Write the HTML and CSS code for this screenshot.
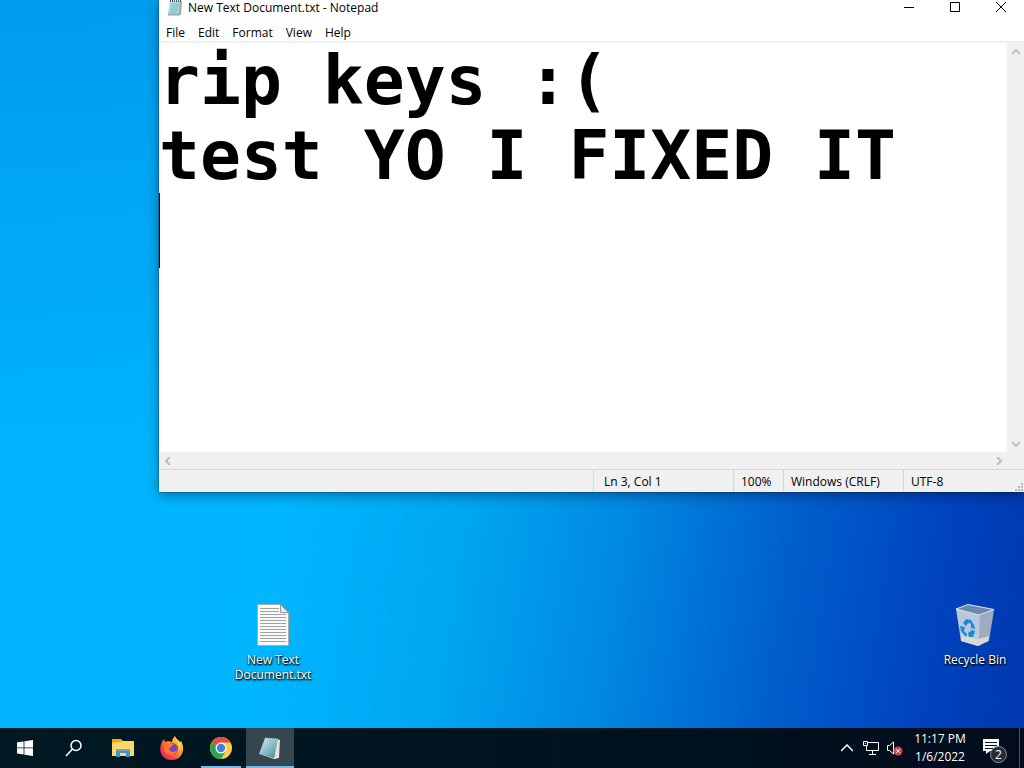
FILE: index.html
```html
<!DOCTYPE html>
<html lang="en">
<head>
<meta charset="utf-8">
<meta name="viewport" content="width=device-width, initial-scale=1">
<title>New Text Document.txt - Notepad</title>
<link rel="stylesheet" href="styles.css">
</head>
<body>
<main class="desktop">
  <section class="window" aria-label="Notepad">
    <header class="titlebar">
      <svg class="title-icon" width="16" height="16" viewBox="0 0 16 16" aria-hidden="true">
        <path d="M3 1h12l-1 14H1z" fill="#8cc9d6"/><path d="M3 1h10l-2 12H1z" fill="#b5dfe8"/>
        <path d="M4 4h8M4 6h8M3 8h8M3 10h8M3 12h7" stroke="#79b5c8"/><path d="M14 2l-1 13H1" fill="none" stroke="#a89c86"/>
        <path d="M3 1h12" stroke="#45525a" stroke-width="2" stroke-dasharray="1 1"/>
      </svg>
      <span class="title">New Text Document.txt - Notepad</span>
      <div class="captions">
        <button class="caption" aria-label="Minimize"><svg width="10" height="10" viewBox="0 0 10 10"><path d="M0 5.500h10" stroke="#000"/></svg></button>
        <button class="caption" aria-label="Maximize"><svg width="10" height="10" viewBox="0 0 10 10"><path d="M.5.5h9v9h-9z" fill="none" stroke="#000"/></svg></button>
        <button class="caption" aria-label="Close"><svg width="10" height="10" viewBox="0 0 10 10"><path d="M0 0l10 10M10 0L0 10" stroke="#000"/></svg></button>
      </div>
    </header>
    <nav class="menubar" aria-label="Menu">
      <button class="menu">File</button><button class="menu">Edit</button><button class="menu">Format</button><button class="menu">View</button><button class="menu">Help</button>
    </nav>
    <div class="editor">
      <textarea class="text" aria-label="Text editor" wrap="off" spellcheck="false">rip keys :(
test YO I FIXED IT
</textarea>
      <span class="caret"></span>
      <div class="vscroll">
        <button class="arrow" aria-label="Scroll up"><svg width="8" height="6" viewBox="0 0 8 6"><path d="M0 5l4-4 4 4" /></svg></button>
        <button class="arrow" aria-label="Scroll down"><svg width="8" height="6" viewBox="0 0 8 6"><path d="M0 1l4 4 4-4" /></svg></button>
      </div>
    </div>
    <div class="hscroll">
      <button class="arrow" aria-label="Scroll left"><svg width="6" height="8" viewBox="0 0 6 8"><path d="M5 0L1 4l4 4" /></svg></button>
      <button class="arrow" aria-label="Scroll right"><svg width="6" height="8" viewBox="0 0 6 8"><path d="M1 0l4 4-4 4" /></svg></button>
    </div>
    <footer class="status">
      <span class="cell cell-position">Ln 3, Col 1</span>
      <span class="cell cell-zoom">100%</span>
      <span class="cell cell-ending">Windows (CRLF)</span>
      <span class="cell cell-encoding">UTF-8</span>
      <svg class="grip" width="9" height="9" viewBox="0 0 9 9" fill="#b8b8b8" aria-hidden="true"><path d="M7 0h2v2H7zM4 3h2v2H4zM7 3h2v2H7zM1 6h2v2H1zM4 6h2v2H4zM7 6h2v2H7z"/></svg>
    </footer>
  </section>

  <button class="shortcut shortcut-document">
    <svg width="32" height="42" viewBox="0 0 32 42" aria-hidden="true">
      <path d="M.5.5h23l8 8v33H.5z" fill="#fafafa" stroke="#b3a99f"/>
      <path d="M3 4.500h19M3 7.500h19M3 10.500h26M3 13.500h26M3 16.500h26M3 19.500h26M3 22.500h26M3 25.500h26M3 28.500h26M3 31.500h26M3 34.500h26M3 37.500h26" stroke="#a2a2a2"/>
      <path d="M23.500.5v8h8z" fill="#e6eef2" stroke="#8e989d"/>
    </svg>
    <span>New Text Document.txt</span>
  </button>
  <button class="shortcut shortcut-bin">
    <svg width="40" height="42" viewBox="0 0 40 42" aria-hidden="true">
      <path d="M1 5l23 6-1 31-17-5z" fill="#b9c8dc"/><path d="M24 11l15-5-5 31-11 5z" fill="#9eabc0"/>
      <path d="M1 5L13 .5l26 5L24 11z" fill="#6f88ae" stroke="#e1e9f2"/>
      <path d="M6 31l17 4 11-3-1 5-10 5-17-5z" fill="#d8d8d5"/>
      <path d="M24 11l-1 31" stroke="#cbd5e2"/>
      <path d="M8 19l3-4 5 1 1 4-4-1-2 3zM16 16l3 5 1 4-4-1zM5 22l5 1-1 4 3 3-1 3-5-6zM13 29l4-3 3 1-2 6h-4z" fill="#168bdc"/>
    </svg>
    <span>Recycle Bin</span>
  </button>
</main>

<footer class="taskbar">
  <div class="apps">
    <button class="app" aria-label="Start"><svg width="16" height="16" viewBox="0 0 16 16" fill="#fff"><path d="M0 2.300l6.600-.9v6.100H0zM7.400 1.300L16 0v7.500H7.400zM0 8.300h6.600v6.200L0 13.600zM7.400 8.300H16V16l-8.600-1.300z"/></svg></button>
    <button class="app" aria-label="Search"><svg width="18" height="18" viewBox="0 0 18 18" fill="none" stroke="#fff" stroke-width="1.500"><circle cx="11" cy="6.500" r="5"/><path d="M7.500 10L1 17"/></svg></button>
    <button class="app" aria-label="File Explorer"><svg width="22" height="18" viewBox="0 0 22 18"><path d="M0 0h9l2 2h10v15H0z" fill="#e7aa24"/><path d="M0 4l9-1 2-1h11v15H0z" fill="#ffd767"/><path d="M4 18v-8h14v8h-4v-4H8v4z" fill="#3994cf"/><path d="M4 10h14v2H4z" fill="#63a9cb"/></svg></button>
    <button class="app" aria-label="Firefox"><svg width="24" height="24" viewBox="0 0 24 24">
      <defs><linearGradient id="fire" x1="1" y1="0" x2="0" y2="1"><stop stop-color="#fff34f"/><stop offset=".4" stop-color="#ff9825"/><stop offset=".7" stop-color="#ff3e41"/><stop offset="1" stop-color="#df168f"/></linearGradient></defs>
      <path d="M2 6l2-3 1 3 3-1 4 1c0-3 2-5 3-6 1 3 4 4 5 6l1-1c5 8 1 19-9 19C1 24-2 14 2 6z" fill="url(#fire)"/>
      <circle cx="12" cy="13" r="6" fill="#7445c8"/><path d="M5 8c4-3 6 0 9 0l-3 3c-3 1-2 4 1 5 3 0 3-1 5-2-1 5-7 7-11 3-3-3-2-7-1-9z" fill="#ff7830"/><path d="M15 3c4 4 5 9 3 13 4-4 4-9-3-13z" fill="#ffe43f"/>
    </svg></button>
    <button class="app app-open" aria-label="Google Chrome"><svg width="22" height="22" viewBox="0 0 22 22"><circle cx="11" cy="11" r="11" fill="#ffcf42"/><path d="M11 11L1.500 5.500A11 11 0 0 1 20.500 5.500H11z" fill="#e54a3d"/><path d="M1.500 5.500A11 11 0 0 0 11 22l5-8.500-5-2.500z" fill="#28a557"/><circle cx="11" cy="11" r="5.500" fill="#fff"/><circle cx="11" cy="11" r="4.200" fill="#427fdc"/></svg></button>
    <button class="app app-open app-active" aria-label="Notepad"><svg width="24" height="24" viewBox="0 0 24 24"><defs><linearGradient id="note" x1="0" y1="0" x2="1" y2="1"><stop stop-color="#d9f0ef"/><stop offset=".6" stop-color="#7fb4bf"/><stop offset="1" stop-color="#408394"/></linearGradient></defs><path d="M18 3l4 1-1 18-5 1z" fill="#e2e3dd"/><path d="M7 2l13 1-4 19L1 18z" fill="url(#note)"/><path d="M1 18l15 4 5-1-5 2z" fill="#d8e1e0"/><path d="M7 2l13 1" stroke="#c3cccd" stroke-dasharray="1 1"/></svg></button>
  </div>
  <div class="tray">
    <button class="tray-button" aria-label="Show hidden icons"><svg width="12" height="8" viewBox="0 0 12 8" fill="none" stroke="#fff" stroke-width="1.500"><path d="M0 7l6-6 6 6"/></svg></button>
    <button class="tray-button" aria-label="Network"><svg width="16" height="14" viewBox="0 0 16 14" fill="none" stroke="#fff"><path d="M5 1.500h10.500v8H3.500V5M9.500 10v3M6 13.500h7M.5.5h4v4h-4zM2.500 2v1"/></svg></button>
    <button class="tray-button" aria-label="Volume muted"><svg width="18" height="16" viewBox="0 0 18 16"><path d="M1.500 5.500h2L7.500 2v12l-4-3.500h-2z" fill="none" stroke="#fff"/><circle cx="12" cy="11" r="4.500" fill="#d64545"/><path d="M10 9l4 4M14 9l-4 4" stroke="#fff"/></svg></button>
    <button class="clock"><span>11:17 PM</span><span>1/6/2022</span></button>
    <button class="notices" aria-label="Notifications, 2 new"><svg width="18" height="17" viewBox="0 0 18 17"><path d="M1 1h16v12H8l-4 3v-3H1z" fill="#fff"/><path d="M3 4.500h12M3 7.500h12M3 10.500h8" stroke="#07131f"/></svg><span class="badge">2</span></button>
    <button class="show-desktop" aria-label="Show desktop"></button>
  </div>
</footer>
</body>
</html>
```
FILE: styles.css
```css
* { box-sizing: border-box; }

body {
  margin: 0;
  height: 100vh;
  display: flex;
  flex-direction: column;
  overflow: hidden;
  font: 12px/16px "Segoe UI", "Open Sans", sans-serif;
  color: #000;
}

button {
  margin: 0;
  padding: 0;
  border: 0;
  background: none;
  color: inherit;
  font: inherit;
}

.desktop {
  position: relative;
  flex: 1;
  background:
    linear-gradient(180deg, rgba(0, 100, 200, 0.3), transparent 65%),
    linear-gradient(99deg, #00b4fe 0%, #00b6ff 32%, #00a6f2 48%, #0089e2 62%, #005fcd 77%, #0042be 91%, #0038b0 100%);
}

.window {
  position: absolute;
  top: 0;
  left: 159px;
  right: 0;
  height: 492px;
  display: flex;
  flex-direction: column;
  background: #fff;
  box-shadow: 0 3px 12px rgba(0, 0, 0, 0.4), 0 0 1px #000;
}

.titlebar {
  height: 24px;
  display: flex;
  align-items: flex-start;
  padding-left: 8px;
}

.title-icon { margin-right: 5px; }

.captions {
  margin-left: auto;
  display: flex;
}

.caption {
  width: 46px;
  height: 14px;
  display: grid;
  place-items: center;
}

.menubar {
  height: 19px;
  display: flex;
  border-bottom: 2px solid #f0f0f0;
}

.menu { padding: 0 6px 0 7px; }

.editor {
  position: relative;
  flex: 1;
  display: flex;
  min-height: 0;
}

.text {
  flex: 1;
  min-width: 0;
  border: 0;
  margin: 0;
  padding: 0;
  outline: 0;
  resize: none;
  overflow: hidden;
  background: #fff;
  color: #000;
  font: bold 68px/75px "DejaVu Sans Mono", monospace;
}

.caret {
  position: absolute;
  top: 150px;
  left: 0;
  width: 1px;
  height: 75px;
  background: #000;
}

.vscroll,
.hscroll {
  display: flex;
  justify-content: space-between;
  background: #f0f0f0;
}

.vscroll {
  width: 17px;
  flex-direction: column;
}

.hscroll {
  height: 17px;
  padding-right: 17px;
}

.arrow {
  width: 17px;
  height: 17px;
  display: grid;
  place-items: center;
}

.arrow path {
  fill: none;
  stroke: #bdbdbd;
  stroke-width: 2;
}

.status {
  position: relative;
  height: 23px;
  display: flex;
  justify-content: flex-end;
  border-top: 1px solid #d7d7d7;
  background: #f0f0f0;
}

.cell {
  padding: 4px 7px 0;
  border-left: 1px solid #d7d7d7;
}

.cell-position { width: 140px; padding-left: 10px; }
.cell-zoom { width: 50px; }
.cell-ending { width: 120px; }
.cell-encoding { width: 121px; }

.grip {
  position: absolute;
  right: 1px;
  bottom: 0;
}

.shortcut {
  position: absolute;
  top: 604px;
  width: 76px;
  display: flex;
  flex-direction: column;
  align-items: center;
  gap: 6px;
  color: #fff;
  line-height: 15px;
  text-shadow: 0 1px 2px #000, 1px 1px 2px #000;
}

.shortcut-document { left: 235px; }
.shortcut-bin { right: 11px; }

.taskbar {
  height: 40px;
  display: flex;
  justify-content: space-between;
  background: linear-gradient(90deg, #001923, #00141f 50%, #020c1c);
  color: #fff;
}

.apps,
.tray {
  display: flex;
}

.apps {
  gap: 1px;
  padding-left: 1px;
}

.app {
  width: 48px;
  display: grid;
  place-items: center;
}

.app-open {
  background: linear-gradient(#76b9ed, #76b9ed) center bottom / 40px 2px no-repeat;
}

.app-active {
  background: linear-gradient(#76b9ed, #76b9ed) center bottom / 100% 2px no-repeat, #35464f;
}

.tray-button {
  width: 24px;
  display: grid;
  place-items: center;
}

.clock {
  width: 66px;
  display: flex;
  flex-direction: column;
  align-items: center;
  justify-content: center;
  line-height: 18px;
}

.notices {
  position: relative;
  width: 46px;
  padding-left: 9px;
  text-align: left;
}

.badge {
  position: absolute;
  left: 17px;
  top: 18px;
  width: 17px;
  height: 17px;
  border: 1px solid #8a8f96;
  border-radius: 50%;
  background: #252c35;
  line-height: 15px;
  text-align: center;
}

.show-desktop {
  width: 5px;
  border-left: 1px solid #4b535e;
}
```
